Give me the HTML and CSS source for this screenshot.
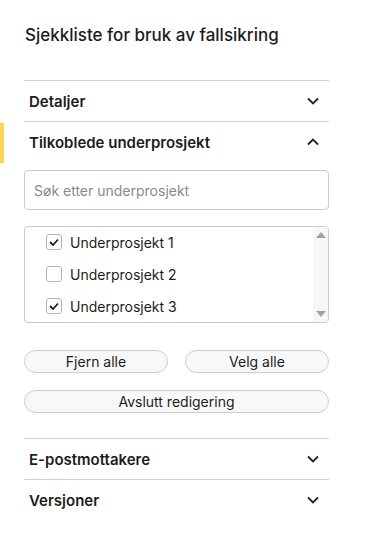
FILE: index.html
```html
<!DOCTYPE html>
<html lang="no">
<head>
    <meta charset="UTF-8">
    <meta name="viewport" content="width=device-width, initial-scale=1.0">
    <title>Sjekkliste</title>
    <link rel="stylesheet" href="styles.css">
</head>
<body>
    <div class="panel">
        <h1 class="title">Sjekkliste for bruk av fallsikring</h1>

        <div class="section">
            <div class="section-head">
                <span>Detaljer</span>
                <svg class="chev" width="12" height="8" viewBox="0 0 12 8"><path d="M1 1.5l5 5 5-5"/></svg>
            </div>
        </div>

        <div class="section open">
            <div class="section-head">
                <span>Tilkoblede underprosjekt</span>
                <svg class="chev" width="12" height="8" viewBox="0 0 12 8"><path d="M1 6.5l5-5 5 5"/></svg>
            </div>
            <div class="section-body">
                <input class="search" type="text" placeholder="Søk etter underprosjekt">
                <div class="list">
                    <div class="items">
                        <label class="item">
                            <span class="box checked"><svg width="10" height="8" viewBox="0 0 10 8"><path d="M1 4l3 3 5-5.5"/></svg></span>
                            Underprosjekt 1
                        </label>
                        <label class="item">
                            <span class="box"></span>
                            Underprosjekt 2
                        </label>
                        <label class="item">
                            <span class="box checked"><svg width="10" height="8" viewBox="0 0 10 8"><path d="M1 4l3 3 5-5.5"/></svg></span>
                            Underprosjekt 3
                        </label>
                    </div>
                    <div class="scrollbar">
                        <span class="arrow up"></span>
                        <span class="arrow down"></span>
                    </div>
                </div>
                <div class="btn-row">
                    <button class="btn">Fjern alle</button>
                    <button class="btn">Velg alle</button>
                </div>
                <button class="btn wide">Avslutt redigering</button>
            </div>
        </div>

        <div class="section">
            <div class="section-head">
                <span>E-postmottakere</span>
                <svg class="chev" width="12" height="8" viewBox="0 0 12 8"><path d="M1 1.5l5 5 5-5"/></svg>
            </div>
        </div>

        <div class="section">
            <div class="section-head">
                <span>Versjoner</span>
                <svg class="chev" width="12" height="8" viewBox="0 0 12 8"><path d="M1 1.5l5 5 5-5"/></svg>
            </div>
        </div>
    </div>
</body>
</html>
```

FILE: styles.css
```css
body {
    margin: 0;
    background: #ffffff;
    font-family: 'Inter', 'Noto Sans', sans-serif;
    color: #1c1c1c;
}
.panel {
    width: 305px;
    padding: 24px 0 0 24px;
}
.title {
    margin: 0 0 34px 1px;
    font-size: 17px;
    line-height: 22px;
    font-weight: 500;
}
.section {
    position: relative;
    border-top: 1px solid #cfcfcf;
}
.section.open::before {
    content: '';
    position: absolute;
    left: -24px;
    top: 1px;
    width: 4px;
    height: 40px;
    background: #ffd54f;
}
.section-head {
    display: flex;
    align-items: center;
    justify-content: space-between;
    height: 40px;
    padding: 0 10px 0 5px;
    font-size: 15px;
    font-weight: 600;
}
.chev path {
    fill: none;
    stroke: #222;
    stroke-width: 1.8;
}
.section-body {
    padding: 8px 0 25px;
}
.search {
    display: block;
    box-sizing: border-box;
    width: 100%;
    height: 40px;
    padding: 0 9px;
    border: 1px solid #cccccc;
    border-radius: 4px;
    font-family: inherit;
    font-size: 14px;
    color: #1c1c1c;
    outline: none;
}
.search::placeholder {
    color: #8a8a8a;
}
.list {
    display: flex;
    margin-top: 16px;
    height: 97px;
    box-sizing: border-box;
    border: 1px solid #cccccc;
    border-radius: 4px;
    overflow: hidden;
}
.items {
    flex: 1;
    margin-top: -1px;
}
.item {
    display: flex;
    align-items: center;
    gap: 8px;
    height: 32px;
    padding-left: 21px;
    font-size: 14px;
}
.box {
    display: flex;
    align-items: center;
    justify-content: center;
    width: 14px;
    height: 14px;
    border: 1px solid #b5b5b5;
    border-radius: 3px;
    background: #fff;
}
.box path {
    fill: none;
    stroke: #222;
    stroke-width: 1.8;
}
.scrollbar {
    position: relative;
    width: 15px;
    background: #f7f7f7;
}
.arrow {
    position: absolute;
    left: 3px;
    width: 0;
    height: 0;
    border-left: 5px solid transparent;
    border-right: 5px solid transparent;
}
.arrow.up {
    top: 5px;
    border-bottom: 6px solid #a3a3a3;
}
.arrow.down {
    bottom: 5px;
    border-top: 6px solid #a3a3a3;
}
.btn-row {
    display: flex;
    gap: 17px;
    margin-top: 27px;
}
.btn {
    flex: 1;
    height: 23px;
    border: 1px solid #cccccc;
    border-radius: 12px;
    background: #f8f8f8;
    font-family: inherit;
    font-size: 14px;
    color: #1c1c1c;
    padding: 0;
}
.btn.wide {
    display: block;
    width: 100%;
    margin-top: 17px;
}
```
